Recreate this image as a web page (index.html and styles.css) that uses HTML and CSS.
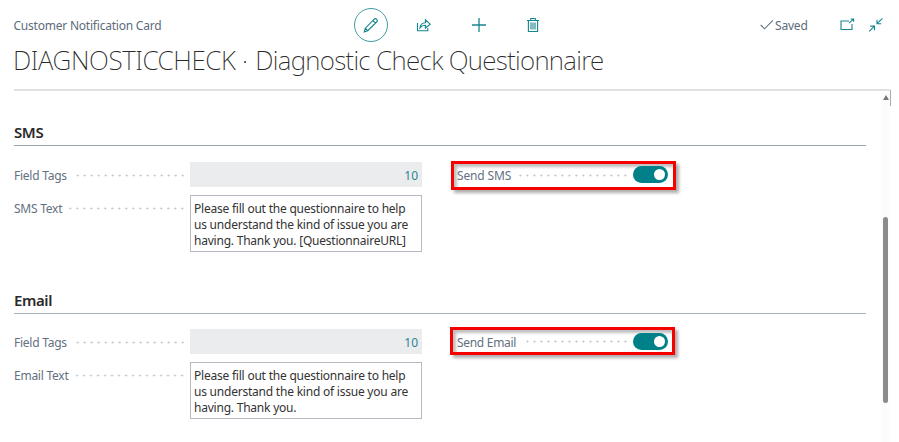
FILE: index.html
```html
<!DOCTYPE html>
<html lang="en">
<head>
<meta charset="utf-8">
<title>Customer Notification Card</title>
<link rel="stylesheet" href="styles.css">
</head>
<body>
<div class="page">
  <header class="topbar">
    <div class="caption"><span>Customer Notification Card</span></div>
    <nav class="actions">
      <span class="edit"><svg width="16" height="16" viewBox="0 0 16 16"><path d="M1.2 14.8 2.3 11.2 11 2.4Q12.4 1 13.7 2.3T13.6 5L4.8 13.7ZM2.3 11.2 4.8 13.7M9.9 3.5 12.5 6.1"/></svg></span>
      <svg class="share" width="16" height="16" viewBox="0 0 16 16"><path d="M1.5 6V13.8H11.8V11M4 10.8Q4.5 5.8 9.4 5.7V2.8L14.2 7.2 9.4 11V8.3Q6 8.2 4 10.8Z"/></svg>
      <svg class="plus" width="16" height="16" viewBox="0 0 16 16"><path d="M8 1V15M1 8H15"/></svg>
      <svg class="trash" width="14" height="16" viewBox="0 0 14 16"><path d="M1 3.5H13M4.7 3.5V1.5H9.3V3.5M2.4 3.5V14.5H11.6V3.5M5 5.5V12.5M7 5.5V12.5M9 5.5V12.5"/></svg>
    </nav>
    <div class="status">
      <svg class="check" width="14" height="12" viewBox="0 0 14 12"><path d="M.7 6 4.5 9.8 12.9 1.4"/></svg>
      <span class="saved">Saved</span>
      <svg class="popout" width="15" height="13" viewBox="0 0 15 13"><path d="M9 3H1V11.5H12V6M9.2 5.2 13.2 1.2M10.8 1H13.6V3.8"/></svg>
      <svg class="collapse" width="16" height="16" viewBox="0 0 16 16"><path d="M14.5 1.3 9 6.7M9 2.7V6.7H13.3M1.2 14.3 6.5 9.2M2.3 9.1H6.5V13.2"/></svg>
    </div>
  </header>
  <h1><span class="code">DIAGNOSTICCHECK ·</span> <span class="name">Diagnostic Check Questionnaire</span></h1>
  <main class="panel">
    <div class="content">
      <section class="sms">
        <h2>SMS</h2>
        <div class="columns">
          <div class="fields">
            <div class="field"><div class="label"><span>Field Tags</span><i class="dots tags"></i></div><div class="number">10</div></div>
            <div class="field"><div class="label"><span>SMS Text</span><i class="dots"></i></div><div class="memo"><p>Please fill out the questionnaire to help</p><p>us understand the kind of issue you are</p><p>having. Thank you. [QuestionnaireURL]</p></div></div>
          </div>
          <div class="marked"><span class="toggle-label">Send SMS</span><i class="dots"></i><span class="toggle"></span></div>
        </div>
      </section>
      <section class="email">
        <h2>Email</h2>
        <div class="columns">
          <div class="fields">
            <div class="field"><div class="label"><span>Field Tags</span><i class="dots tags"></i></div><div class="number">10</div></div>
            <div class="field"><div class="label"><span>Email Text</span><i class="dots"></i></div><div class="memo"><p>Please fill out the questionnaire to help</p><p>us understand the kind of issue you are</p><p>having. Thank you.</p></div></div>
          </div>
          <div class="marked"><span class="toggle-label">Send Email</span><i class="dots"></i><span class="toggle"></span></div>
        </div>
      </section>
    </div>
    <div class="scrollbar"><span class="up"></span><span class="thumb"></span></div>
    <span class="edge"></span>
  </main>
</div>
</body>
</html>
```
FILE: styles.css
```css
* { box-sizing: border-box; }
body { margin: 0; background: #fff; font-family: "Noto Sans", sans-serif; font-size: 12px; color: #333; }
h1, h2, p { margin: 0; }
.page { width: 899px; height: 442px; overflow: hidden; }
svg { display: block; fill: none; stroke: #17858d; stroke-width: 1.1; flex: none; }

.topbar { display: flex; align-items: center; height: 49px; padding-left: 13.5px; }
.caption { width: 340.5px; padding-top: 1px; color: #5d6b7b; font-size: 12px; letter-spacing: -.22px; white-space: nowrap; }
.actions { display: flex; align-items: center; width: 406px; }
.edit { display: flex; align-items: center; justify-content: center; width: 34px; height: 34px; border: 1px solid #409ca3; border-radius: 50%; }
.share { margin-left: 28px; }
.plus { margin-left: 39px; stroke-width: 1.3; }
.trash { margin-left: 39px; }
.status { display: flex; align-items: center; }
.check { stroke: #65717f; }
.saved { width: 66px; padding: 1px 0 0 1px; color: #5d6b7b; letter-spacing: -.2px; }
.popout { margin-right: 13px; }

h1 { height: 40px; padding-left: 13px; font-size: 26px; line-height: 23px; font-weight: 250; color: #292929; white-space: nowrap; }
.code { margin-right: 1px; letter-spacing: -.38px; }
.name { letter-spacing: -.67px; }

.panel { display: flex; height: 353px; margin-left: 14px; position: relative; }
.panel::before { content: ""; position: absolute; left: 0; top: 0; width: 876px; height: 2px; background: #e1e1e1; }
.content { width: 852px; }
section { height: 167px; }
.sms { padding-top: 32px; }
.email { padding-top: 33px; height: 186px; }
h2 { height: 25px; border-bottom: 1px solid #9aa5af; font-size: 15px; line-height: 23px; font-weight: 600; letter-spacing: -.4px; color: #2a2a2a; }
.email h2 { border-bottom-color: #a7b0ba; }
.columns { display: flex; padding-top: 16px; }
.email .columns { padding-top: 15px; }
.fields { display: grid; row-gap: 8px; width: 409px; align-content: start; }
.field { display: flex; align-items: flex-start; }
.label { display: flex; align-items: center; width: 176px; height: 25px; padding: 2px 4px 0 0; color: #637080; letter-spacing: -.25px; }
.dots { flex: 1; height: 3px; margin: -1px 0 0 4px; background: radial-gradient(circle, #bcc0c4 0 .7px, transparent 1.3px) right center / 7px 3px repeat-x; }
.tags { margin-left: 8px; }
.number { width: 232px; height: 25px; padding-right: 4px; background: #ebecee; color: #29858e; line-height: 27px; text-align: right; }
.memo { width: 232px; height: 57px; padding: 5px 3px 3px; border: 1px solid #b5bbc2; line-height: 16px; letter-spacing: -.22px; white-space: nowrap; }
.marked { display: flex; align-items: center; width: 225px; height: 29px; margin: -1px 0 0 28px; padding: 0 5px 2px 3px; border: 3px solid #f60000; box-shadow: 3px 3px 3px rgba(0,0,0,.32), inset 3px 3px 3px rgba(0,0,0,.25); color: #637080; letter-spacing: -.15px; }
.toggle-label { padding-top: 2px; }
.email .marked { height: 28px; margin: -2px 0 0 27px; padding: 0 4px 0 4px; }
.email .toggle-label { letter-spacing: -.3px; }
.marked .dots { margin: 1px 4px 0 7px; }
.toggle { display: flex; align-items: center; justify-content: flex-end; width: 35px; height: 17px; padding-right: 3px; border-radius: 9px; background: #008089; }
.toggle::after { content: ""; width: 11px; height: 11px; border-radius: 50%; background: #fff; }
.scrollbar { width: 9px; margin: 3px 0 0 15px; background: #fcfcfc; }
.up { display: block; width: 0; margin: 3px auto 0 2px; border: 3px solid transparent; border-top: 0; border-bottom: 5px solid #777; }
.thumb { display: block; width: 5px; height: 186px; margin: 117px 0 0 2px; border-radius: 3px; background: #8b8b8b; }
.edge { width: 1px; height: 16px; margin-top: 1px; background: #aaa; }
```
